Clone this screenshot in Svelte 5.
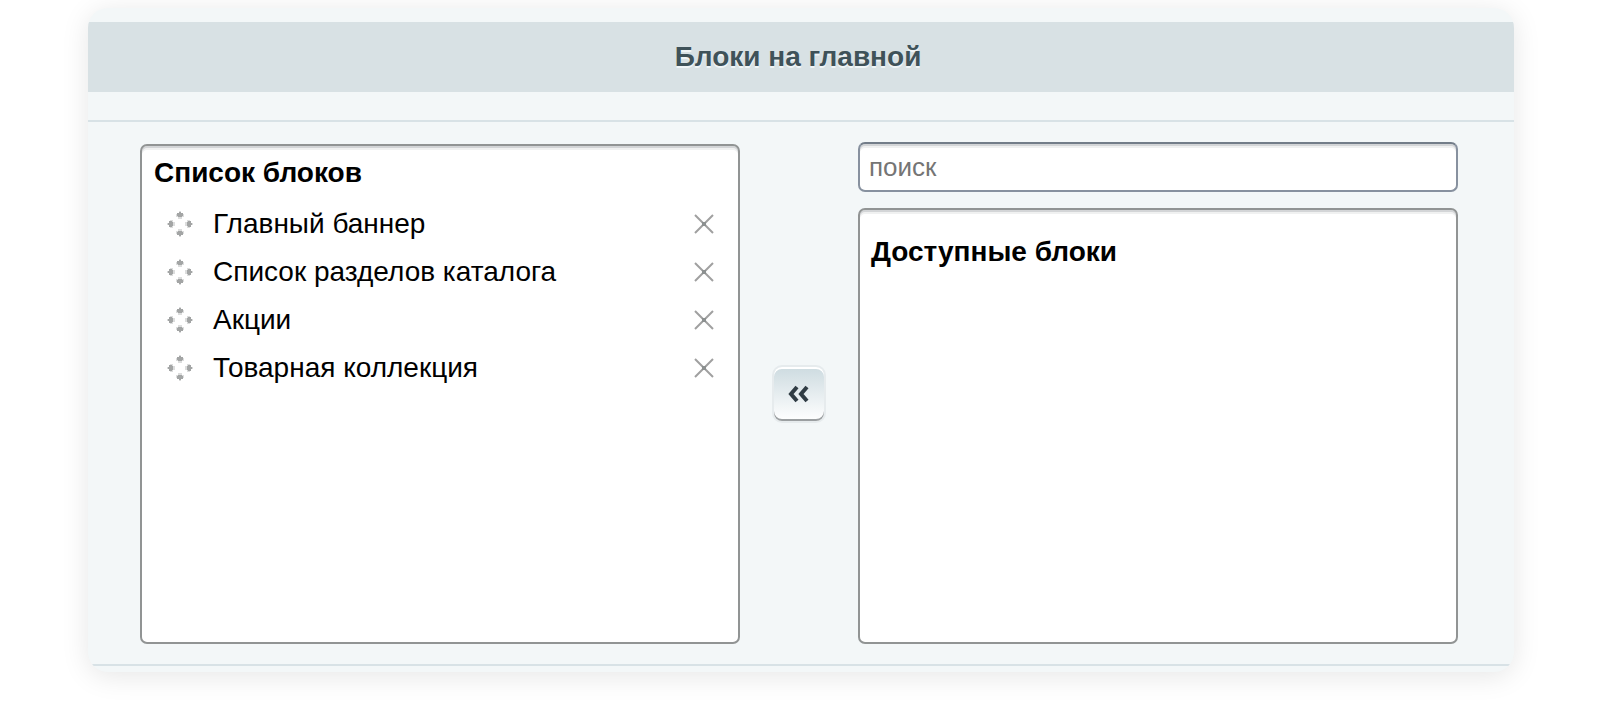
<script>
  let blocks = $state([
    'Главный баннер',
    'Список разделов каталога',
    'Акции',
    'Товарная коллекция'
  ]);
  let query = $state('');

  function remove(index) {
    blocks.splice(index, 1);
  }
</script>

<div class="page">
  <main class="card">
    <h1>Блоки на главной</h1>
    <div class="picker">
      <section class="panel chosen">
        <h2>Список блоков</h2>
        <ul>
          {#each blocks as block, i}
            <li>
              <svg class="grip" width="26" height="26" viewBox="0 0 26 26" aria-hidden="true">
                {#each [0, 90, 180, 270] as angle}
                  <g transform="rotate({angle} 13 13)">
                    <path d="M12 0h2v2h2v1h1v3h-2v2h-4v-2h-2v-3h1v-1h2z" fill="#dcdddd" />
                    <path d="M12 1h2v1h2v3h-1v1h-4v-1h-1v-3h2z" fill="#a3a5a5" />
                  </g>
                {/each}
              </svg>
              <span>{block}</span>
              <button class="remove" type="button" aria-label="Удалить" onclick={() => remove(i)}>
                <svg width="20" height="20" viewBox="0 0 20 20" aria-hidden="true">
                  <path d="M1 1l18 18M19 1l-18 18" stroke="#a0a0a0" stroke-width="2" />
                  <path d="M8 8h4v4h-4z" fill="#8c9090" />
                </svg>
              </button>
            </li>
          {/each}
        </ul>
      </section>
      <div class="transfer">
        <button class="move" type="button" aria-label="Добавить">
          <svg width="22" height="18" viewBox="0 0 22 18" aria-hidden="true">
            <path d="M9 2l-6 7l6 7M19 2l-6 7l6 7" fill="none" stroke="#303c44" stroke-width="4" />
          </svg>
        </button>
      </div>
      <div class="available">
        <input type="search" placeholder="поиск" aria-label="поиск" bind:value={query} />
        <section class="panel">
          <h2>Доступные блоки</h2>
        </section>
      </div>
    </div>
  </main>
</div>

<style>
  :global(body) {
    background: #fff;
    font-family: "Liberation Sans", Arial, sans-serif;
  }
  .page {
    padding: 8px 86px 34px 88px;
  }
  .card {
    padding: 14px 0 6px;
    border-radius: 20px;
    overflow: hidden;
    background: #f3f7f8;
    box-shadow: 0 4px 28px rgba(0, 0, 0, 0.1);
  }
  h1 {
    margin: 0 0 28px;
    padding: 0 6px 0 0;
    background: #d8e1e4;
    color: #3f5259;
    font-size: 28px;
    font-weight: bold;
    line-height: 70px;
    text-align: center;
    text-shadow: 0 2px #f0f5f7;
  }
  .picker {
    display: grid;
    grid-template-columns: 1fr 118px 1fr;
    padding: 20px 56px 20px 52px;
    border-top: 2px solid #d8e2e6;
    border-bottom: 2px solid #d8e2e6;
  }
  .panel {
    box-sizing: border-box;
    border: 2px solid #919494;
    border-radius: 7px;
    background: #fff;
    box-shadow: inset 0 2px #d3d5d7, inset 0 4px #f0f1f1;
    color: #000;
  }
  .chosen {
    min-height: 500px;
    margin-top: 2px;
    padding: 10px 24px 10px 12px;
  }
  h2 {
    margin: 0;
    font-size: 28px;
    font-weight: bold;
    line-height: 34px;
  }
  ul {
    list-style: none;
    margin: 0;
    padding: 10px 0 0 13px;
  }
  li {
    display: flex;
    align-items: center;
    height: 48px;
    font-size: 28px;
    line-height: 34px;
  }
  li span {
    flex: 1;
    padding-left: 20px;
  }
  .remove {
    display: flex;
    padding: 0;
    border: 0;
    background: none;
  }
  .transfer {
    display: flex;
    align-items: center;
    justify-content: center;
    padding-top: 2px;
  }
  .move {
    display: flex;
    align-items: center;
    justify-content: center;
    width: 50px;
    height: 54px;
    padding: 0;
    border: 0;
    border-radius: 8px;
    background: linear-gradient(#cddbe0, #fff);
    box-shadow: inset 0 2px #fff, inset 0 -2px #9b9fa1, 0 0 0 2px #e6ebed;
  }
  .available {
    display: flex;
    flex-direction: column;
    gap: 16px;
  }
  input {
    box-sizing: border-box;
    width: 100%;
    height: 50px;
    margin: 0;
    padding: 0 9px;
    border: 2px solid #87919f;
    border-top-color: #737d89;
    border-radius: 7px;
    background: #fff;
    box-shadow: inset 0 2px #d3d5d7, inset 0 4px #f0f1f1;
    font: 26px "Liberation Sans", Arial, sans-serif;
    outline: none;
    appearance: none;
  }
  input::placeholder {
    color: #757575;
    opacity: 1;
  }
  .available .panel {
    flex: 1;
    padding: 25px 11px;
  }
</style>
